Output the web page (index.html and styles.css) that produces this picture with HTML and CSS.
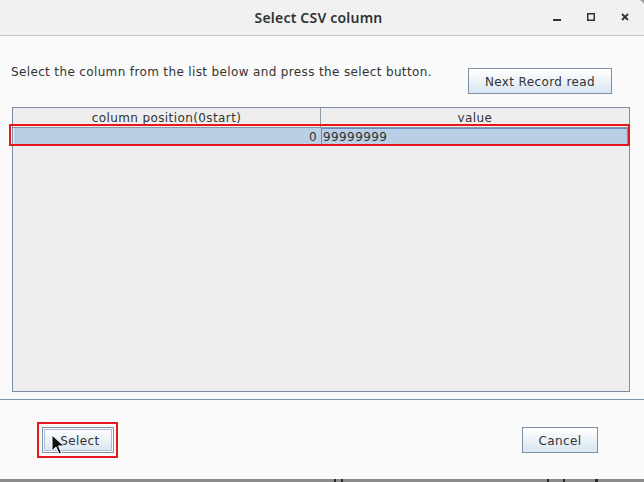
FILE: index.html
```html
<!DOCTYPE html>
<html>
<head>
<meta charset="utf-8">
<link rel="stylesheet" href="styles.css">
</head>
<body>
<div class="window">
  <div class="titlebar">
    <div class="title">Select CSV column</div>
    <div class="controls">
      <svg class="ctl" width="10" height="10" viewBox="0 0 10 10"><rect x="1" y="7" width="8" height="2" fill="#2e3436"/></svg>
      <svg class="ctl" width="10" height="10" viewBox="0 0 10 10"><rect x="1.75" y="1.75" width="6.5" height="6.5" fill="none" stroke="#2e3436" stroke-width="1.5"/></svg>
      <svg class="ctl" width="10" height="10" viewBox="0 0 10 10"><path d="M2 2 L8 8 M8 2 L2 8" stroke="#2e3436" stroke-width="1.8"/></svg>
    </div>
  </div>
  <div class="content">
    <div class="top-row">
      <div class="label">Select the column from the list below and press the select button.</div>
      <button class="btn btn-next">Next Record read</button>
    </div>
    <div class="table">
      <div class="thead">
        <div class="th th1">column position(0start)</div>
        <div class="th th2">value</div>
      </div>
      <div class="row-wrap">
        <div class="row">
          <div class="td td1">0</div>
          <div class="td td2">99999999</div>
        </div>
      </div>
    </div>
  </div>
  <div class="separator"></div>
  <div class="bottom-row">
    <div class="hl">
      <button class="btn btn-select">Select</button>
    </div>
    <button class="btn btn-cancel">Cancel</button>
  </div>
  <svg class="cursor" width="14" height="22" viewBox="0 0 14 22"><path d="M1 1 L1 17 L5 13 L8 20 L10.5 19 L7.5 12 L13 12 Z" fill="#111" stroke="#fff" stroke-width="1"/></svg>
</div>
<div class="below">
  <span class="mark m1"></span><span class="mark m2"></span><span class="mark m3"></span><span class="mark m4"></span><span class="mark m5"></span>
</div>
</body>
</html>
```
FILE: styles.css
```css
html, body {
  margin: 0;
  padding: 0;
  width: 644px;
  height: 482px;
  overflow: hidden;
  background: #9a9a9a;
}
.window {
  position: relative;
  width: 644px;
  height: 479px;
  background: #fafafa;
  display: flex;
  flex-direction: column;
  border-top-right-radius: 6px;
  font-family: "DejaVu Sans", sans-serif;
  color: #333;
}
.titlebar {
  height: 35px;
  background: #f1f1f1;
  border-bottom: 1px solid #c6c6c6;
  border-top-right-radius: 6px;
  display: flex;
  align-items: center;
  position: relative;
}
.title {
  flex: 1;
  text-align: center;
  font-family: "Noto Sans", sans-serif;
  font-weight: 600;
  font-size: 14px;
  letter-spacing: 0.2px;
  color: #2e3436;
  padding-right: 7px;
}
.controls {
  position: absolute;
  right: 14px;
  top: 12px;
  display: flex;
  gap: 24px;
}
.ctl { display: block; }
.content {
  display: flex;
  flex-direction: column;
}
.top-row {
  display: flex;
  align-items: flex-start;
  justify-content: space-between;
  margin-top: 28px;
  padding-left: 11px;
  padding-right: 32px;
}
.label {
  font-size: 12px;
  line-height: 16px;
  letter-spacing: 0.36px;
  color: #333;
}
.btn {
  font-family: "DejaVu Sans", sans-serif;
  font-size: 12px;
  letter-spacing: 0.38px;
  color: #333;
  height: 26px;
  border: 1px solid #7d8fa3;
  background: linear-gradient(#ffffff 0%, #f2f6fa 35%, #d8e5f1 100%);
  padding: 2px 0 0 0;
  margin: 0;
  border-radius: 0;
}
.btn-next {
  margin-top: 4px;
  width: 144px;
}
.table {
  margin-top: 13px;
  margin-left: 12px;
  width: 616px;
  height: 283px;
  border: 1px solid #7f8e9e;
  background: #eeeeee;
}
.thead {
  display: flex;
  height: 19px;
  border-bottom: 1px solid #8c99a6;
  background: #eeeeee;
}
.th {
  font-size: 12px;
  line-height: 18px;
  padding-top: 1px;
  letter-spacing: 0.4px;
  text-align: center;
  color: #333;
}
.th1 {
  width: 307px;
  border-right: 1px solid #8c99a6;
}
.th2 { flex: 1; }
.row-wrap {
  position: relative;
  padding-left: 1px;
}
.row {
  display: flex;
  height: 17px;
  background: #b8cfe5;
}
.td {
  font-size: 12px;
  line-height: 14px;
  padding-top: 1px;
  letter-spacing: 0.4px;
  color: #333;
}
.td1 {
  width: 303px;
  text-align: right;
  padding-right: 4px;
  line-height: 16px;
}
.td2 {
  flex: 1;
  border: 1px solid #6a8cc0;
  padding-left: 1px;
  margin-right: 1px;
}
.row-wrap::after {
  content: "";
  position: absolute;
  left: -4px;
  top: -4px;
  width: 617px;
  height: 18px;
  border: 2px solid #e8161d;
}
.separator {
  margin-top: 7px;
  height: 1px;
  background: #7f93b3;
}
.bottom-row {
  display: flex;
  justify-content: space-between;
  align-items: flex-start;
  padding-left: 37px;
  padding-right: 46px;
  margin-top: 22px;
}
.hl {
  border: 2px solid #e8161d;
  padding: 3px 2px 3px 3px;
}
.btn-select {
  display: block;
  width: 72px;
  box-shadow: inset 0 0 0 1px #fff, inset 0 0 0 2px #a9c0d8;
  padding-left: 4px;
}
.btn-cancel {
  margin-top: 5px;
  width: 76px;
}
.cursor {
  position: absolute;
  left: 51px;
  top: 434px;
}
.below {
  height: 3px;
  background: #8c8c8c;
  display: flex;
}
.mark { display: block; height: 3px; background: #2a2a2a; }
.m1 { margin-left: 334px; width: 2px; }
.m2 { margin-left: 5px; width: 2px; }
.m3 { margin-left: 204px; width: 2px; }
.m4 { margin-left: 14px; width: 2px; }
.m5 { margin-left: 30px; width: 3px; }
```
